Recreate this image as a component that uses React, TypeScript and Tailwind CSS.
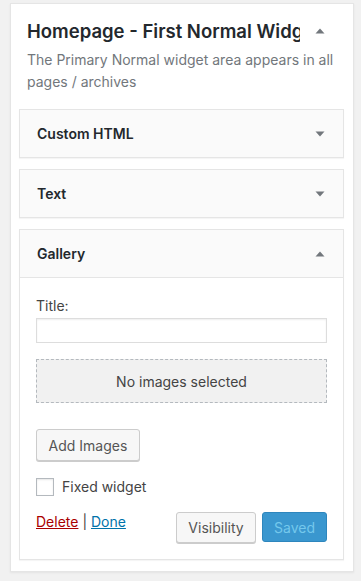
import React from "react";

const font = { fontFamily: 'Inter, "Liberation Sans", Arial, sans-serif' };

function TriDown() {
  return (
    <svg width="10" height="6" viewBox="0 0 10 6" className="shrink-0">
      <path d="M0.5 0.5 L9.5 0.5 L5 5.5 Z" fill="#72777c" />
    </svg>
  );
}
function TriUp() {
  return (
    <svg width="10" height="6" viewBox="0 0 10 6" className="shrink-0">
      <path d="M0.5 5.5 L9.5 5.5 L5 0.5 Z" fill="#72777c" />
    </svg>
  );
}

function Collapsed({ title }: { title: string }) {
  return (
    <div className="h-[49px] border border-[#e5e5e5] bg-[#fafafa] shadow-[0_1px_1px_rgba(0,0,0,0.04)] flex items-center justify-between pl-[17px] pr-[18px]">
      <span className="text-[14px] font-semibold text-[#23282d]">{title}</span>
      <TriDown />
    </div>
  );
}

export default function App() {
  return (
    <div className="w-[361px] h-[581px] bg-[#f1f1f1] pt-[3px] pl-[10px] overflow-hidden" style={font}>
      <div className="w-[344px] h-[569px] bg-white border border-[#e5e5e5] shadow-[0_1px_2px_rgba(0,0,0,0.06)] pl-[8px] pr-[9px]">
        <div className="pl-[8px] pr-[19px] pt-[15px] h-[105px]">
          <div className="flex items-center justify-between">
            <div className="w-[273px] overflow-hidden whitespace-nowrap text-[18.5px] font-semibold text-[#23282d] leading-[24px]">
              Homepage - First Normal Widget Area
            </div>
            <TriUp />
          </div>
          <p className="mt-[6px] -mr-[10px] text-[14px] leading-[22px] text-[#72777c]">
            The Primary Normal widget area appears in all pages / archives
          </p>
        </div>
        <div className="flex flex-col gap-[11px]">
          <Collapsed title="Custom HTML" />
          <Collapsed title="Text" />
          <div className="border border-[#e5e5e5] bg-white shadow-[0_1px_1px_rgba(0,0,0,0.04)]">
            <div className="h-[48px] bg-[#fafafa] border-b border-[#e5e5e5] flex items-center justify-between pl-[17px] pr-[18px]">
              <span className="text-[14px] font-semibold text-[#23282d]">Gallery</span>
              <TriUp />
            </div>
            <div className="pl-[16px] pr-[16px] pt-[18px] pb-[16px]">
              <div className="text-[14px] text-[#444] leading-[20px]">Title:</div>
              <div className="mt-[2px] h-[25px] border border-[#ddd] shadow-[inset_0_1px_2px_rgba(0,0,0,0.07)] bg-white" />
              <div className="mt-[16px] h-[44px] border border-dashed border-[#b4b9be] bg-[#f1f1f1] flex items-center justify-center text-[14px] text-[#444]">
                No images selected
              </div>
              <button className="mt-[26px] h-[32px] w-[104px] whitespace-nowrap border border-[#ccc] bg-[#f7f7f7] rounded-[3px] shadow-[0_1px_0_#ccc] text-[14px] text-[#555]">
                Add Images
              </button>
              <div className="mt-[15px] flex items-center gap-[8px]">
                <div className="w-[18px] h-[18px] border border-[#b4b9be] bg-white shadow-[inset_0_1px_2px_rgba(0,0,0,0.1)]" />
                <span className="text-[14px] text-[#444]">Fixed widget</span>
              </div>
              <div className="mt-[15px] flex items-start justify-between">
                <div className="text-[14px] leading-[20px]">
                  <span className="text-[#a00] underline">Delete</span>
                  <span className="text-[#444]"> | </span>
                  <span className="text-[#0073aa] underline">Done</span>
                </div>
                <div className="flex gap-[6px]">
                  <button className="h-[31px] w-[80px] whitespace-nowrap border border-[#ccc] bg-[#f7f7f7] rounded-[3px] shadow-[0_1px_0_#ccc] text-[14px] text-[#555]">
                    Visibility
                  </button>
                  <button className="h-[30px] w-[65px] whitespace-nowrap border border-[#2e86bd] bg-[#3a97cf] rounded-[3px] text-[14px] text-[#74c8ec]">
                    Saved
                  </button>
                </div>
              </div>
            </div>
          </div>
        </div>
      </div>
    </div>
  );
}
